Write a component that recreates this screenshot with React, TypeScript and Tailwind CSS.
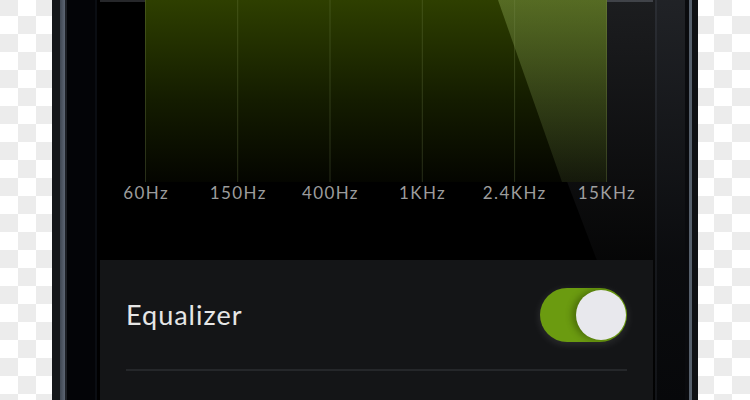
const labels = ["60Hz", "150Hz", "400Hz", "1KHz", "2.4KHz", "15KHz"];
const gridX = [0.5, 92.7, 185, 277.3, 369.6, 461.5];

const Checker = ({ pos }: { pos: string }) => (
  <div
    className={`w-[52px] h-full shrink-0 bg-[conic-gradient(#ececec_25%,#ffffff_0_50%,#ececec_0_75%,#ffffff_0)] bg-[length:36px_36px] ${pos}`}
  />
);

const Chart = () => (
  <svg width="462" height="182" viewBox="0 0 462 182" className="block">
    <defs>
      <linearGradient id="fill" x1="0" y1="0" x2="0" y2="1">
        <stop offset="0" stopColor="#2e3f00" />
        <stop offset="0.55" stopColor="#141c00" />
        <stop offset="1" stopColor="#040500" />
      </linearGradient>
      <linearGradient id="beam" x1="0" y1="0" x2="0" y2="1">
        <stop offset="0" stopColor="#aac86e" stopOpacity="0.32" />
        <stop offset="1" stopColor="#aac86e" stopOpacity="0.1" />
      </linearGradient>
    </defs>
    <rect x="0" y="0" width="462" height="182" fill="url(#fill)" />
    <polygon points="353,0 462,0 462,182 417,182" fill="url(#beam)" />
    {gridX.map((x) => (
      <line
        key={x}
        x1={x}
        x2={x}
        y1="0"
        y2="182"
        stroke="#7a8c50"
        strokeOpacity="0.3"
        strokeWidth="1"
      />
    ))}
  </svg>
);

const Toggle = () => (
  <div className="w-[87px] h-[54px] rounded-full bg-[#6b9b10] flex items-center justify-end pr-[1px] shadow-[0_2px_8px_rgba(255,255,255,0.12)]">
    <div className="w-[50px] h-[50px] rounded-full bg-[#e8e8ed] shadow-[-4px_0_6px_rgba(40,60,0,0.45)]" />
  </div>
);

export default function App() {
  return (
    <div
      className="w-[750px] h-[400px] flex overflow-hidden bg-black"
      style={{ fontFamily: "Lato, 'Open Sans', sans-serif" }}
    >
      <Checker pos="bg-[position:18px_-2px]" />

      {/* phone */}
      <div className="relative w-[646px] h-full flex shrink-0">
        {/* left bezel */}
        <div className="w-[8px] bg-[#15171a]" />
        <div className="w-[5px] bg-[linear-gradient(90deg,#3e4651,#5d6673)]" />
        <div className="w-[2px] bg-[#1c1f24]" />
        <div className="w-[28px] bg-[#030407]" />
        <div className="w-[2px] bg-[#0a0d12]" />

        {/* screen */}
        <div className="w-[558px] bg-black pl-[3px] pr-[2px] flex flex-col">
          <div className="flex h-[182px]">
            <div className="w-[45px] border-t-2 border-[#26272a]" />
            <Chart />
            <div className="w-[46px] border-t-2 border-[#2a2c30]" />
          </div>

          <div className="flex h-[78px] pt-[1px]">
            {labels.map((l) => (
              <div
                key={l}
                className="w-[92.3px] text-center text-[17px] leading-[20px] tracking-[1.4px] text-[#9c9c9c]"
              >
                {l}
              </div>
            ))}
          </div>

          <div className="flex-1 bg-[#141517] px-[26px]">
            <div className="flex items-center justify-between pt-[28px] pb-[27px]">
              <span className="text-[27px] leading-[54px] tracking-[1px] text-[#e6e6e6]">
                Equalizer
              </span>
              <Toggle />
            </div>
            <div className="h-[2px] bg-[#25272a]" />
          </div>
        </div>

        {/* right bezel */}
        <div className="w-[2px] bg-[#111317]" />
        <div className="w-[28px] bg-[#050608]" />
        <div className="w-[4px] bg-[#0a0b0e]" />
        <div className="w-[3px] bg-[#56606c]" />
        <div className="w-[6px] bg-[#0f1114]" />

        {/* light reflection over the glass */}
        <svg
          className="absolute inset-0 pointer-events-none"
          width="646"
          height="400"
          viewBox="0 0 646 400"
        >
          <defs>
            <linearGradient id="glare" x1="0" y1="0" x2="0" y2="400" gradientUnits="userSpaceOnUse">
              <stop offset="0" stopColor="#c8d0e0" stopOpacity="0.14" />
              <stop offset="0.65" stopColor="#c8d0e0" stopOpacity="0.03" />
              <stop offset="1" stopColor="#c8d0e0" stopOpacity="0.01" />
            </linearGradient>
            <clipPath id="hole">
              <path
                clipRule="evenodd"
                d="M0 0H646V400H0Z M93 0H555V182H93Z M48 260H601V400H48Z"
              />
            </clipPath>
          </defs>
          <polygon
            points="446,0 633,0 633,400 598,400"
            fill="url(#glare)"
            clipPath="url(#hole)"
          />
        </svg>
      </div>

      <Checker pos="bg-[position:-2px_-2px]" />
    </div>
  );
}
